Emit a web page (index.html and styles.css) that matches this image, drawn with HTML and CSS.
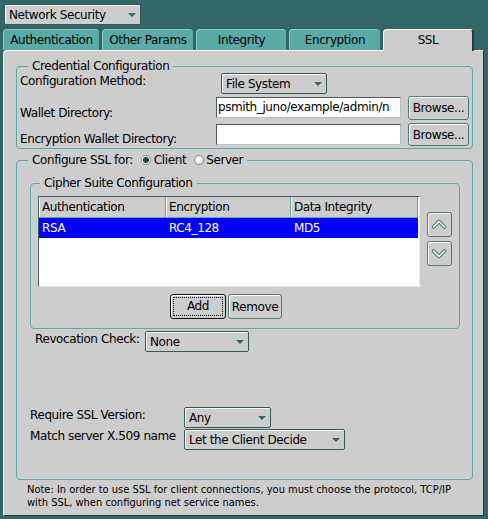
FILE: index.html
```html
<!DOCTYPE html>
<html lang="en">
<head>
  <meta charset="UTF-8" />
  <title>Network Security</title>
  <link rel="stylesheet" href="styles.css">
</head>
<body>
  <div class="topbar">
    <div class="combo combo-net"><span>Network Security</span><i class="arrow"></i></div>
  </div>

  <div class="tabs">
    <div class="tab t-auth">Authentication</div>
    <div class="tab t-other">Other Params</div>
    <div class="tab t-integ">Integrity</div>
    <div class="tab t-enc">Encryption</div>
    <div class="tab t-ssl tab-active">SSL</div>
  </div>

  <div class="panel">
    <fieldset class="group cred">
      <legend>Credential Configuration</legend>
      <div class="row r1">
        <label class="lbl lbl-method">Configuration Method:</label>
        <div class="combo combo-method"><span>File System</span><i class="arrow"></i></div>
      </div>
      <div class="row r2">
        <label class="lbl lbl-wallet">Wallet Directory:</label>
        <div class="field">psmith_juno/example/admin/n</div>
        <button class="btn btn-browse">Browse...</button>
      </div>
      <div class="row r3">
        <label class="lbl lbl-wallet lbl-enc">Encryption Wallet Directory:</label>
        <div class="field"></div>
        <button class="btn btn-browse btn-browse2">Browse...</button>
      </div>
    </fieldset>

    <fieldset class="group ssl">
      <legend class="ssl-legend">Configure SSL for:<span class="radio radio-on"></span>Client<span class="radio radio-off"></span>Server</legend>

      <fieldset class="group cipher">
        <legend>Cipher Suite Configuration</legend>
        <div class="cipher-body">
          <div class="grid-wrap">
            <table class="grid">
              <colgroup>
                <col class="c1"><col class="c2"><col class="c3">
              </colgroup>
              <thead>
                <tr><th>Authentication</th><th>Encryption</th><th>Data Integrity</th></tr>
              </thead>
              <tbody>
                <tr class="sel"><td>RSA</td><td>RC4_128</td><td>MD5</td></tr>
              </tbody>
            </table>
          </div>
          <div class="movers">
            <button class="btn btn-move">
              <svg width="25" height="25" viewBox="0 0 25 25"><polyline points="6.5,15 12,9.5 17.5,15" fill="none" stroke="#4d7f7c" stroke-width="3.6" stroke-linecap="round" stroke-linejoin="round"/><polyline points="6.5,15 12,9.5 17.5,15" fill="none" stroke="#fff" stroke-width="1.4" stroke-linecap="round" stroke-linejoin="round"/></svg>
            </button>
            <button class="btn btn-move">
              <svg width="25" height="25" viewBox="0 0 25 25"><polyline points="6.5,10 12,15.5 17.5,10" fill="none" stroke="#4d7f7c" stroke-width="3.6" stroke-linecap="round" stroke-linejoin="round"/><polyline points="6.5,10 12,15.5 17.5,10" fill="none" stroke="#fff" stroke-width="1.4" stroke-linecap="round" stroke-linejoin="round"/></svg>
            </button>
          </div>
        </div>
        <div class="actions">
          <button class="btn btn-add"><span>Add</span></button>
          <button class="btn btn-remove">Remove</button>
        </div>
      </fieldset>

      <div class="row r-revoc">
        <label class="lbl lbl-revoc">Revocation Check:</label>
        <div class="combo combo-revoc"><span>None</span><i class="arrow"></i></div>
      </div>
      <div class="row r-req">
        <label class="lbl lbl-ver">Require SSL Version:</label>
        <div class="combo combo-ver"><span>Any</span><i class="arrow"></i></div>
      </div>
      <div class="row r-match">
        <label class="lbl lbl-ver lbl-match">Match server X.509 name</label>
        <div class="combo combo-match"><span>Let the Client Decide</span><i class="arrow"></i></div>
      </div>
    </fieldset>

    <p class="note">Note: In order to use SSL for client connections, you must choose the protocol, TCP/IP<br>with SSL, when configuring net service names.</p>
  </div>
</body>
</html>
```

FILE: styles.css
```css
* {
  box-sizing: border-box;
}

body {
  margin: 0;
  width: 488px;
  height: 519px;
  overflow: hidden;
  background: #336666;
  font-family: "DejaVu Sans", Verdana, sans-serif;
  font-size: 12px;
  letter-spacing: -0.4px;
  color: #000;
}

/* combo boxes */
.combo {
  display: flex;
  align-items: center;
  justify-content: space-between;
  height: 21px;
  padding: 0 4px 0 4px;
  background: #cdcdcd;
  border: 1px solid #2f5a58;
  border-radius: 2px;
  box-shadow: inset 1px 1px 0 #fff;
  white-space: nowrap;
}

.combo .arrow {
  width: 0;
  height: 0;
  border-left: 4px solid transparent;
  border-right: 4px solid transparent;
  border-top: 4px solid #336666;
}

.topbar {
  height: 25px;
  padding: 4px 0 0 4px;
}

.combo-net {
  width: 137px;
}

/* tabs */
.tabs {
  display: flex;
  gap: 3px;
  height: 21px;
  margin-top: 4px;
  padding-left: 3px;
}

.tab {
  height: 21px;
  line-height: 20px;
  text-align: center;
  background: #5aaba7;
  border-top: 1px solid #8ccbc7;
  border-left: 1px solid #8ccbc7;
  border-radius: 4px 4px 0 0;
}

.t-auth { width: 96px; }
.t-other { width: 91px; }
.t-integ { width: 90px; }
.t-enc { width: 91px; }
.t-ssl { width: 91px; }

.tab-active {
  position: relative;
  z-index: 1;
  height: 22px;
  background: #cdcdcd;
  border-top-color: #fff;
  border-left-color: #fff;
  border-right: 2px solid #1f3f3e;
}

/* main panel */
.panel {
  width: 481px;
  height: 466px;
  margin-left: 3px;
  padding: 8px 0 0 12px;
  background: #cdcdcd;
  border-top: 1px solid #fff;
  border-left: 1px solid #fff;
  border-right: 1px solid #1f3f3e;
  border-bottom: 1px solid #1f3f3e;
  border-radius: 4px 0 0 0;
}

.group {
  min-width: 0;
  margin: 0;
  padding: 0;
  border: 1px solid #5aaba7;
  border-radius: 4px;
}

.group legend {
  margin-left: 11px;
  padding: 0 4px;
  line-height: 14px;
}

.row {
  display: flex;
  align-items: flex-start;
}

.lbl {
  flex: none;
  line-height: 14px;
}

/* credential configuration */
.cred {
  width: 457px;
  padding-bottom: 2px;
}

.cred .row {
  padding-left: 3px;
}

.r1 { height: 22px; }
.r2 { height: 24px; margin-top: 1px; }
.r3 { height: 23px; margin-top: 3px; }

.lbl-method {
  width: 201px;
  padding-top: 1px;
}

.lbl-wallet {
  width: 196px;
  padding-top: 10px;
}

.lbl-enc {
  padding-top: 9px;
}

.combo-method {
  width: 106px;
}

.field {
  width: 185px;
  height: 21px;
  margin-top: 1px;
  padding-left: 1px;
  line-height: 19px;
  background: #fff;
  border: 1px solid;
  border-color: #4a5a5a #b8c4c4 #b8c4c4 #4a5a5a;
  overflow: hidden;
  white-space: nowrap;
}

.btn {
  padding: 0;
  font: inherit;
  letter-spacing: inherit;
  color: #000;
  background: #cdcdcd;
  border: 1px solid #4c7c7a;
  border-radius: 3px;
  box-shadow: inset 1px 1px 0 #fff;
}

.btn-browse {
  width: 61px;
  height: 24px;
  margin-left: 7px;
}

.btn-browse2 {
  height: 23px;
}

/* ssl */
.ssl {
  width: 457px;
  margin-top: 4px;
}

.ssl-legend {
  white-space: nowrap;
}

.radio {
  display: inline-block;
  width: 10px;
  height: 10px;
  border-radius: 50%;
  vertical-align: -1px;
  border: 1px solid #7c9a99;
}

.radio-on {
  margin: 0 3px 0 8px;
  background: radial-gradient(circle, #1f4a48 0, #1f4a48 2.5px, #e8eeee 3.5px);
}

.radio-off {
  margin: 0 2px 0 8px;
  background: radial-gradient(circle at 40% 40%, #fff 0, #f2f2f2 3px, #d8dede 5px);
}

.cipher {
  width: 430px;
  margin: 9px 0 0 13px;
  padding-bottom: 9px;
}

.cipher legend {
  margin-left: 9px;
}

.cipher-body {
  display: flex;
  margin: 6px 0 0 7px;
}

.grid-wrap {
  width: 382px;
  height: 91px;
  background: #fff;
  border: 1px solid;
  border-color: #336666 #e6e6e6 #e6e6e6 #336666;
}

.grid {
  width: 379px;
  table-layout: fixed;
  border-collapse: separate;
  border-spacing: 0;
}

.c1 { width: 127px; }
.c2 { width: 125px; }
.c3 { width: 127px; }

.grid th {
  height: 21px;
  padding: 0 3px;
  text-align: left;
  font-weight: normal;
  background: #cdcdcd;
  border-right: 1px solid #5aaba7;
  border-bottom: 1px solid #5aaba7;
  box-shadow: inset 1px 0 0 #fff;
}

.grid td {
  height: 20px;
  padding: 0 3px;
  white-space: nowrap;
}

.grid .sel td {
  background: #0000ff;
  color: #fff;
}

.movers {
  display: flex;
  flex-direction: column;
  gap: 4px;
  margin-left: 7px;
  padding-top: 16px;
}

.btn-move {
  width: 25px;
  height: 25px;
  display: block;
}

.btn-move svg {
  display: block;
  margin: -1px;
}

.actions {
  display: flex;
  gap: 2px;
  margin: 7px 0 0 139px;
}

.btn-add {
  width: 56px;
  height: 25px;
  padding: 2px;
  border-color: #111;
}

.btn-add span {
  display: block;
  height: 100%;
  line-height: 17px;
  border: 1px dotted #000;
}

.btn-remove {
  width: 54px;
  height: 25px;
}

.r-revoc {
  height: 22px;
  margin: 2px 0 0 18px;
}

.lbl-revoc {
  width: 110px;
  padding-top: 1px;
}

.combo-revoc {
  width: 104px;
}

.r-req {
  margin: 54px 0 0 13px;
}

.lbl-ver {
  width: 154px;
  padding-top: 1px;
}

.lbl-match {
  padding-top: 0;
}

.combo-ver {
  width: 87px;
}

.r-match {
  margin: 1px 0 29px 13px;
}

.combo-match {
  width: 161px;
}

.note {
  margin: 3px 0 0 11px;
  font-family: "DejaVu Sans Condensed", "DejaVu Sans", sans-serif;
  font-size: 11px;
  line-height: 13px;
  letter-spacing: 0;
  white-space: nowrap;
}
```
